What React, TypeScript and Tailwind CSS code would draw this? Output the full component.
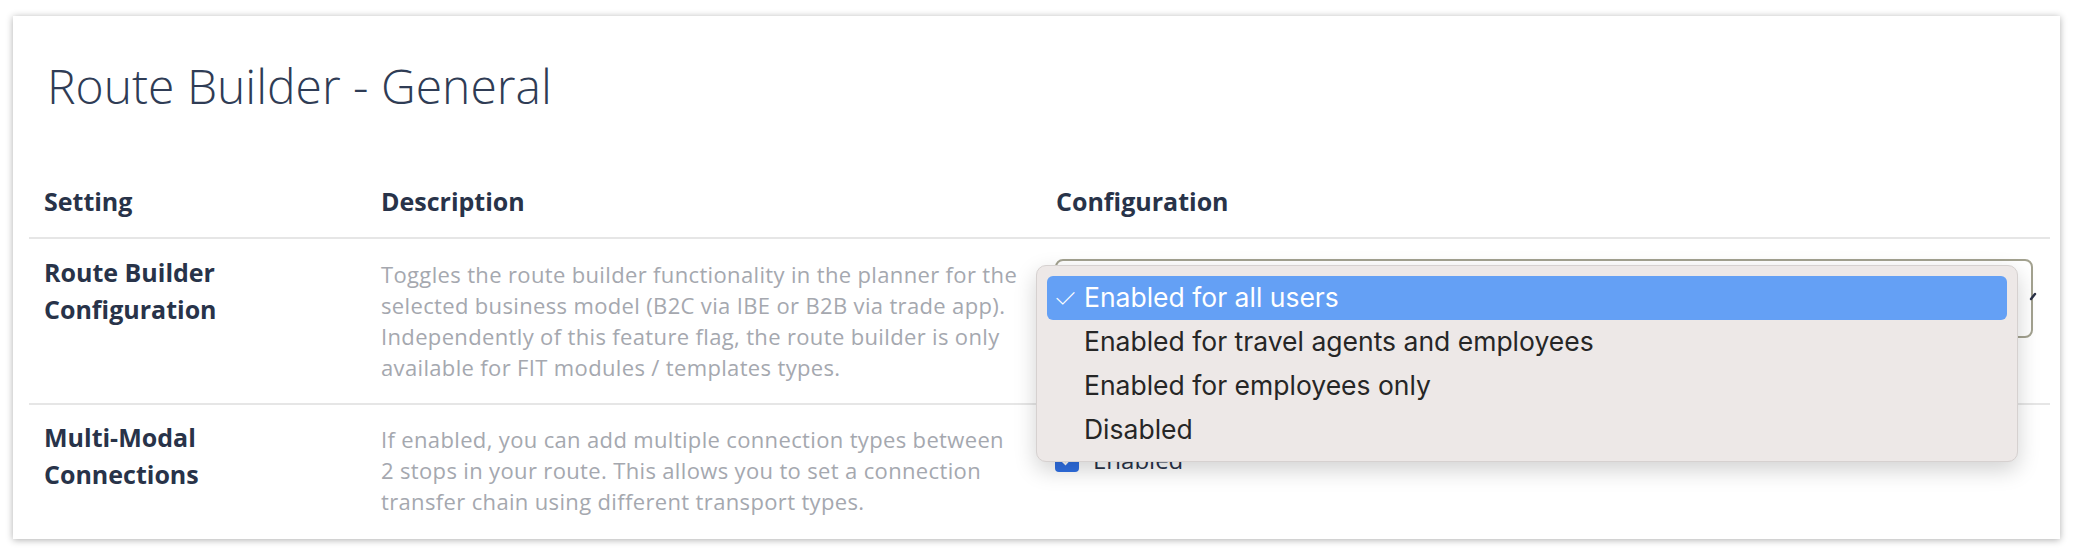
import React from 'react';

const rows = [
  {
    label: ['Route Builder', 'Configuration'],
    desc: [
      'Toggles the route builder functionality in the planner for the',
      'selected business model (B2C via IBE or B2B via trade app).',
      'Independently of this feature flag, the route builder is only',
      'available for FIT modules / templates types.',
    ],
  },
  {
    label: ['Multi-Modal', 'Connections'],
    desc: [
      'If enabled, you can add multiple connection types between',
      '2 stops in your route. This allows you to set a connection',
      'transfer chain using different transport types.',
    ],
  },
];

const options = [
  'Enabled for all users',
  'Enabled for travel agents and employees',
  'Enabled for employees only',
  'Disabled',
];

const SelectMenu: React.FC = () => (
  <div className="relative">
    {/* native select underneath */}
    <div className="h-[79px] w-[978px] rounded-[8px] border-2 border-[#a3a290] bg-white">
      <svg className="absolute right-[12px] top-[30px]" width="10" height="14" viewBox="0 0 10 14">
        <path d="M3 10 L7 5" stroke="#2a3147" strokeWidth="2.4" strokeLinecap="round" />
      </svg>
    </div>
    {/* open dropdown */}
    <div className="absolute left-[-19px] top-[6px] z-10 w-[982px] rounded-[10px] border border-[#d6d1d0] bg-[#ede8e7] px-[10px] pt-[10px] pb-[9px] shadow-[0_8px_22px_rgba(0,0,0,0.18)] font-['Inter',sans-serif] text-[26.5px] text-[#262626]">
      {options.map((o, i) => (
        <div
          key={o}
          className={
            i === 0
              ? 'flex h-[44px] items-center rounded-[6px] bg-[#64a0f5] text-white'
              : 'flex h-[44px] items-center'
          }
        >
          <span className="w-[37px] pl-[6px] text-[28px] font-extralight">{i === 0 ? '✓' : ''}</span>
          <span>{o}</span>
        </div>
      ))}
    </div>
  </div>
);

export default function App() {
  return (
    <div className="h-[556px] w-full bg-white pl-[13px] pt-[16px] font-['Open_Sans',sans-serif]">
      <div className="h-[523px] w-[2047px] bg-white pl-[16px] pr-[10px] shadow-[0_1px_7px_rgba(0,0,0,0.32)]">
        <h1 className="pl-[18px] pt-[42px] text-[48px] font-light leading-[56px] text-[#2f3c55]">
          Route Builder - General
        </h1>

        <div className="mt-[72px] grid grid-cols-[337px_675px_1fr] border-b-2 border-[#e6e6e6] pb-[21px] text-[25px] font-bold leading-[30px] text-[#283349]">
          <div className="pl-[15px]">Setting</div>
          <div className="pl-[15px]">Description</div>
          <div className="pl-[15px]">Configuration</div>
        </div>

        {rows.map((r, idx) => (
          <div
            key={idx}
            className={
              idx === 0
                ? 'grid grid-cols-[337px_675px_1fr] border-b-2 border-[#e6e6e6] pb-[20px] pt-[20px]'
                : 'grid grid-cols-[337px_675px_1fr] pt-[19px] pb-[18px]'
            }
          >
            <div className="-mt-[5px] pl-[15px] text-[25px] font-bold leading-[37px] text-[#283349]">
              {r.label.map((l) => (
                <div key={l}>{l}</div>
              ))}
            </div>
            <div className="pl-[15px] text-[22px] leading-[31px] tracking-[0.35px] text-[#a5a8af]">
              {r.desc.map((l) => (
                <div key={l} className="whitespace-nowrap">{l}</div>
              ))}
            </div>
            <div className="pl-[14px]">
              {idx === 0 ? (
                <SelectMenu />
              ) : (
                <div className="flex items-center gap-[14px] pt-[18px]">
                  <div className="flex h-[24px] w-[24px] items-center justify-center rounded-[4px] bg-[#2f6fe3]">
                    <svg width="16" height="16" viewBox="0 0 16 16">
                      <path d="M3 8.5 L6.5 12 L13 4.5" stroke="white" strokeWidth="2.2" fill="none" />
                    </svg>
                  </div>
                  <span className="text-[24px] text-[#283349]">Enabled</span>
                </div>
              )}
            </div>
          </div>
        ))}
      </div>
    </div>
  );
}
